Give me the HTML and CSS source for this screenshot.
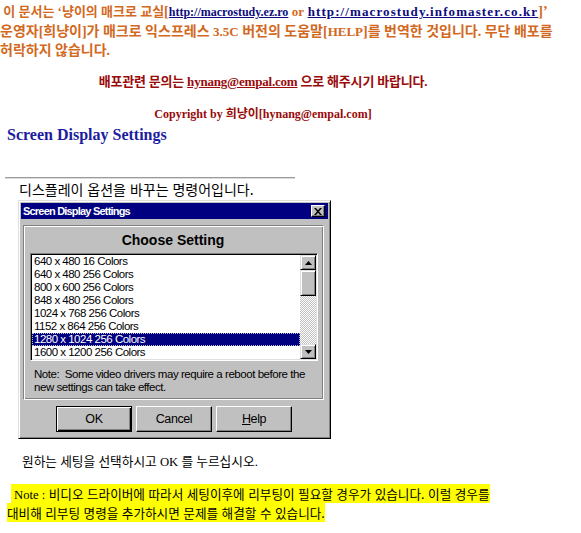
FILE: index.html
```html
<!DOCTYPE html>
<html lang="ko">
<head>
<meta charset="utf-8">
<title>Screen Display Settings</title>
<link rel="stylesheet" href="styles.css">
</head>
<body>
<p class="notice"><span class="lead">&nbsp;이 문서는 ‘냥이의 매크로 교실</span>[<a class="link" href="#">http://macrostudy.ez.ro</a> <span class="lat">or</span> <a class="link link2" href="#">http://macrostudy.infomaster.co.kr</a>]’<br>운영자[희냥이]가 매크로 익스프레스 <span class="lat">3.5C</span> 버전의 도움말[<span class="lat">HELP</span>]를 번역한 것입니다. 무단 배포를<br>허락하지 않습니다.</p>
<div class="center-box">
  <p class="contact">배포관련 문의는 <a class="mail" href="#">hynang@empal.com</a> 으로 해주시기 바랍니다.</p>
  <p class="copyright">Copyright by 희냥이[hynang@empal.com]</p>
</div>
<h1 class="title">Screen Display Settings</h1>
<hr class="rule">
<p class="desc">디스플레이 옵션을 바꾸는 명령어입니다.</p>
<div class="dialog">
  <div class="titlebar">
    <span class="titletext">Screen Display Settings</span>
    <span class="close"><svg width="8" height="7" viewBox="0 0 8 7"><path d="M0 0h2l2 2.2L6 0h2L5 3.5 8 7H6L4 4.8 2 7H0l3-3.5z" fill="#000"/></svg></span>
  </div>
  <div class="group">
    <div class="group-title">Choose Setting</div>
    <div class="listbox">
      <ul class="items">
        <li>640 x 480 16 Colors</li>
        <li>640 x 480 256 Colors</li>
        <li>800 x 600 256 Colors</li>
        <li>848 x 480 256 Colors</li>
        <li>1024 x 768 256 Colors</li>
        <li>1152 x 864 256 Colors</li>
        <li class="selected">1280 x 1024 256 Colors</li>
        <li>1600 x 1200 256 Colors</li>
      </ul>
      <div class="scrollbar">
        <div class="sbtn"><svg width="7" height="4" viewBox="0 0 7 4"><path d="M3.5 0L7 4H0z" fill="#000"/></svg></div>
        <div class="thumb"></div>
        <div class="track"></div>
        <div class="sbtn"><svg width="7" height="4" viewBox="0 0 7 4"><path d="M0 0h7L3.5 4z" fill="#000"/></svg></div>
      </div>
    </div>
    <p class="note">Note:&nbsp; Some video drivers may require a reboot before the<br>new settings can take effect.</p>
  </div>
  <div class="buttons">
    <div class="btn default"><span class="btn-in">OK</span></div>
    <div class="btn"><span class="btn-in">Cancel</span></div>
    <div class="btn"><span class="btn-in"><u>H</u>elp</span></div>
  </div>
</div>
<p class="instr">원하는 세팅을 선택하시고 <span class="lat">OK</span> 를 누르십시오.</p>
<p class="tip">&nbsp;<span class="hl">&nbsp;<span class="lat">Note :</span> 비디오 드라이버에 따라서 세팅이후에 리부팅이 필요할 경우가 있습니다. 이럴 경우를<br>대비해 리부팅 명령을 추가하시면 문제를 해결할 수 있습니다.</span></p>
</body>
</html>
```
FILE: styles.css
```css
* { box-sizing: border-box; }
html, body { margin: 0; padding: 0; background: #fff; }
body {
  width: 581px;
  font-family: "Liberation Serif", "Noto Sans CJK KR", serif;
  color: #000;
}
p { margin: 0; }

.notice {
  margin-top: 2px;
  font-size: 14px;
  line-height: 19px;
  font-weight: bold;
  color: #d2691e;
  white-space: nowrap;
}
.notice .lead { font-size: 13px; }
.notice .link {
  color: #0c0c7e;
  text-decoration: underline;
  font-size: 12px;
}
.notice .link2 { font-size: 13px; letter-spacing: 1.1px; }
.notice .lat { font-size: 13px; }

.center-box { width: 526px; text-align: center; }
.contact {
  margin-top: 12px;
  font-size: 13px;
  line-height: 20px;
  font-weight: bold;
  color: #990a0a;
  letter-spacing: -0.2px;
}
.contact .mail { color: #990a0a; text-decoration: underline; }
.copyright {
  margin-top: 12px;
  font-size: 12px;
  line-height: 20px;
  font-weight: bold;
  color: #990a0a;
}

.title {
  margin: 1px 0 0 7px;
  font-size: 16px;
  line-height: 20px;
  font-weight: bold;
  color: #1c1ca0;
}

.rule {
  margin: 32px 0 0 5px;
  width: 290px;
  height: 2px;
  border: 0;
  border-top: 1px solid #9a9a9a;
  border-bottom: 1px solid #dcdcdc;
}

.desc {
  margin-top: 2px;
  padding-left: 19px;
  font-family: "Noto Sans CJK KR", sans-serif;
  font-size: 14px;
  line-height: 16px;
}

/* Dialog */
.dialog {
  margin: 3px 0 0 18px;
  width: 313px;
  height: 239px;
  background: #c0c0c0;
  border: 1px solid;
  border-color: #dfdfdf #000 #000 #dfdfdf;
  box-shadow: inset 1px 1px #fff, inset -1px -1px #808080;
  padding: 2px;
  font-family: "Liberation Sans", Arial, sans-serif;
}
.titlebar {
  height: 16px;
  background: #000080;
  color: #fff;
  display: flex;
  align-items: center;
  justify-content: space-between;
  padding: 0 3px 0 2px;
}
.titletext { font-weight: bold; font-size: 11px; letter-spacing: -0.8px; line-height: 16px; }
.close {
  width: 14px;
  height: 12px;
  background: #c0c0c0;
  border: 1px solid;
  border-color: #fff #000 #000 #fff;
  box-shadow: inset -1px -1px #808080;
  display: flex;
  align-items: center;
  justify-content: center;
}
.close svg { display: block; }

.group {
  margin: 6px 4px 0 2px;
  height: 175px;
  border: 1px solid;
  border-color: #808080 #fff #fff #808080;
  box-shadow: inset 1px 1px #fff, inset -1px -1px #808080;
  padding: 5px 5px 0 6px;
}
.group-title {
  font-weight: bold;
  font-size: 14px;
  line-height: 18px;
  text-align: center;
  padding-right: 2px;
}
.listbox {
  margin-top: 4px;
  height: 108px;
  display: flex;
  background: #fff;
  border: 1px solid;
  border-color: #808080 #fff #fff #808080;
  box-shadow: inset 1px 1px #000, inset -1px -1px #dfdfdf;
  padding: 1px;
}
.items {
  flex: 1;
  list-style: none;
  margin: 0;
  padding: 0;
  font-size: 11.5px;
  letter-spacing: -0.5px;
}
.items li {
  height: 13px;
  line-height: 13px;
  padding-left: 2px;
}
.items li.selected {
  background: #000080;
  color: #fff;
  outline: 1px dotted #c0c0c0;
  outline-offset: -1px;
}
.scrollbar {
  width: 16px;
  display: flex;
  flex-direction: column;
}
.sbtn {
  height: 15px;
  background: #c0c0c0;
  border: 1px solid;
  border-color: #dfdfdf #000 #000 #dfdfdf;
  box-shadow: inset 1px 1px #fff, inset -1px -1px #808080;
  display: flex;
  align-items: center;
  justify-content: center;
}
.sbtn svg { display: block; }
.thumb {
  height: 26px;
  background: #c0c0c0;
  border: 1px solid;
  border-color: #dfdfdf #000 #000 #dfdfdf;
  box-shadow: inset 1px 1px #fff, inset -1px -1px #808080;
}
.track {
  flex: 1;
  background: repeating-conic-gradient(#c0c0c0 0 25%, #fff 0 50%) 0 0 / 2px 2px;
}
.note {
  margin-top: 7px;
  padding-left: 4px;
  font-size: 11.5px;
  letter-spacing: -0.45px;
  line-height: 13px;
  white-space: nowrap;
}

.buttons {
  margin-top: 6px;
  padding-left: 35px;
  display: flex;
  gap: 4px;
}
.btn {
  width: 76px;
  height: 26px;
  background: #c0c0c0;
  border: 1px solid;
  border-color: #fff #000 #000 #fff;
  box-shadow: inset -1px -1px #808080;
  display: flex;
  align-items: center;
  justify-content: center;
  font-size: 12.5px;
  letter-spacing: -0.4px;
}
.btn.default {
  border: 1px solid #000;
  box-shadow: inset 1px 1px #fff, inset -1px -1px #000, inset -2px -2px #808080;
}
.btn u { text-decoration: underline; }

.instr {
  margin-top: 14px;
  padding-left: 22px;
  font-family: "Liberation Serif", "Noto Sans CJK KR", serif;
  font-size: 12.7px;
  line-height: 18px;
}

.tip {
  margin-top: 14px;
  padding-left: 7px;
  font-family: "Noto Sans CJK KR", sans-serif;
  font-size: 12.6px;
  line-height: 18px;
  white-space: nowrap;
}
.tip .lat { font-family: "Liberation Serif", serif; }
.hl { background: #ffff00; }
```
